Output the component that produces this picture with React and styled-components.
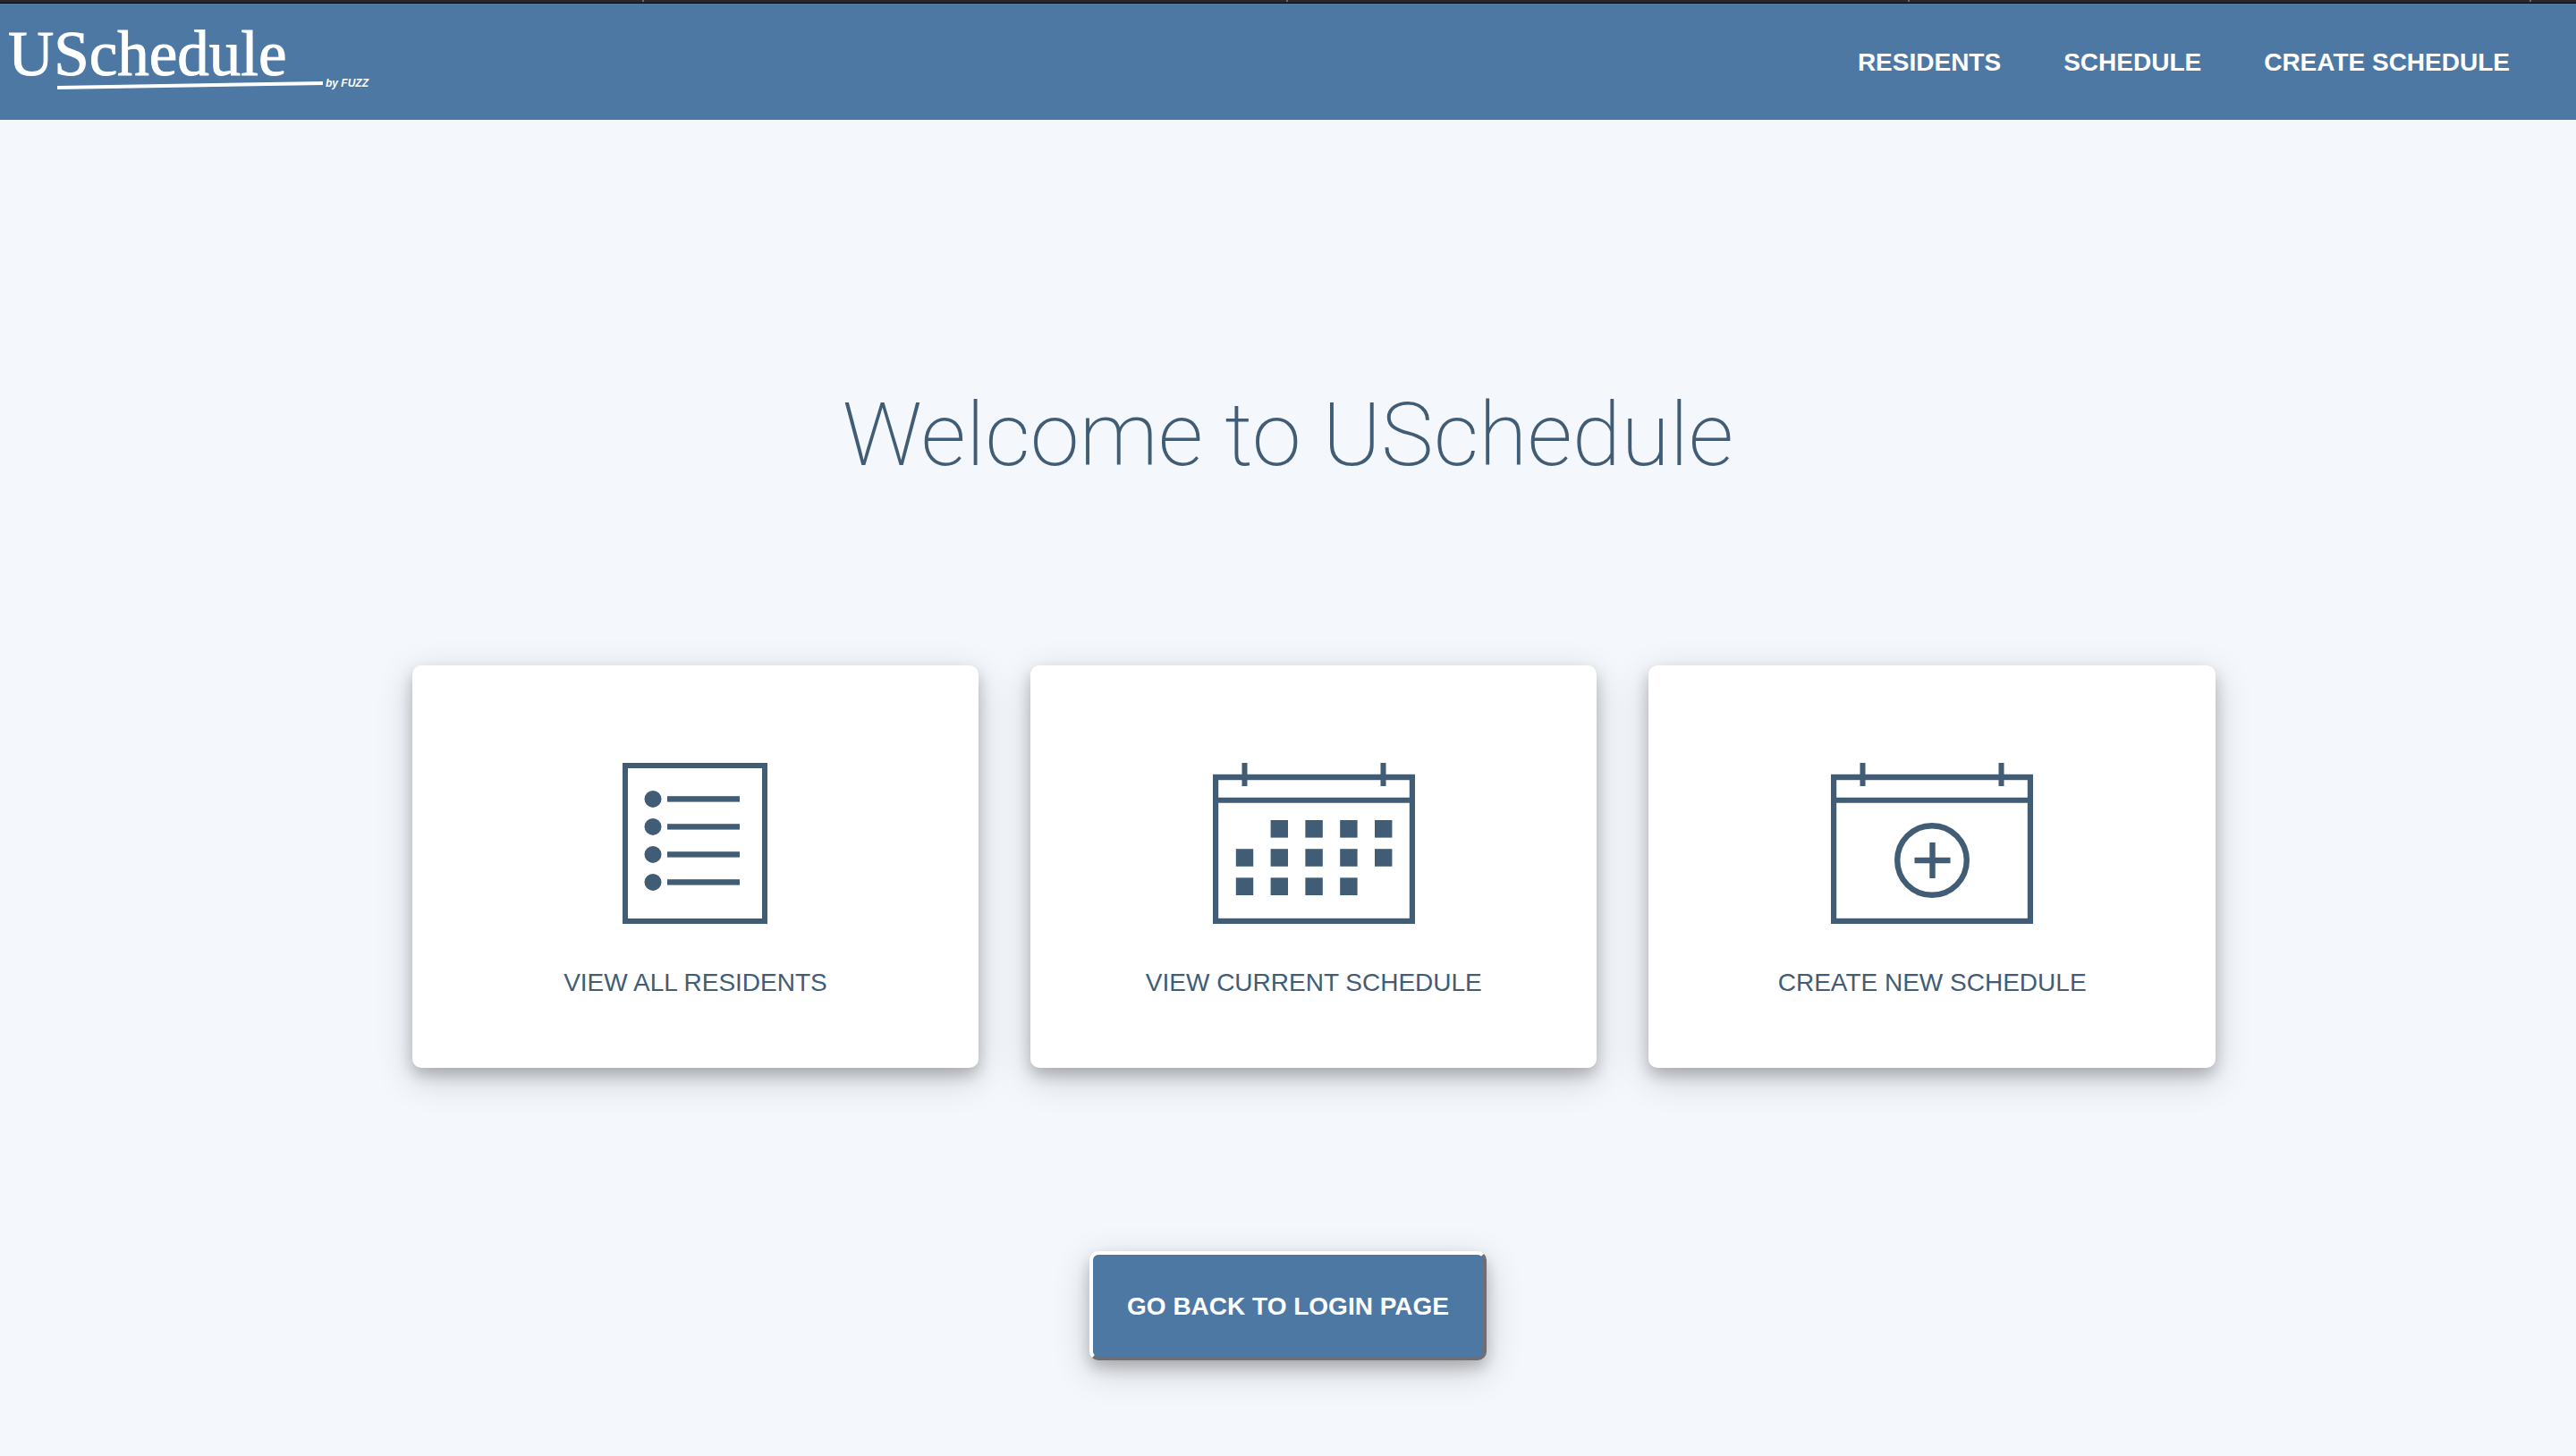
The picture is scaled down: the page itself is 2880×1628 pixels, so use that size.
import React from "react";
import styled, { createGlobalStyle } from "styled-components";

const GlobalStyle = createGlobalStyle`
  * { box-sizing: border-box; }
  body {
    margin: 0;
    background: #f4f7fc;
    font-family: "Liberation Sans", Arial, sans-serif;
    color: #415c75;
  }
`;

const TopStrip = styled.div`
  display: grid;
  grid-template-columns: 144fr 144fr 139fr 139fr 10fr;
  height: 4px;
  background: #28282b;
  border-bottom: 1px solid #000;
`;

const StripTab = styled.span`
  border-right: 2px solid #69696d;
  height: 2px;
  &:last-child { border-right: 0; }
`;

const Header = styled.header`
  display: flex;
  align-items: center;
  justify-content: space-between;
  height: 130px;
  padding: 0 74px 0 8px;
  background: #4c78a3;
`;

const HomeLink = styled.a`
  display: block;
  color: #fff;
  svg { display: block; overflow: visible; }
`;

const Nav = styled.nav`
  display: flex;
  gap: 70px;
  padding-top: 2px;
`;

const NavLink = styled.a`
  color: #fff;
  font-size: 28px;
  line-height: 32px;
  font-weight: 700;
  text-decoration: none;
`;

const Main = styled.main`
  display: flex;
  flex-direction: column;
  align-items: center;
  padding: 292px 0 106px;
`;

const Title = styled.h1`
  margin: 0;
  font-family: Roboto, "Liberation Sans", sans-serif;
  font-size: 99px;
  line-height: 120px;
  font-weight: 200;
`;

const Cards = styled.div`
  display: grid;
  grid-template-columns: repeat(3, 1fr);
  gap: 58px;
  width: 100%;
  margin-top: 198px;
  padding: 0 14% 0 16%;
`;

const Card = styled.a`
  display: flex;
  flex-direction: column;
  align-items: center;
  gap: 50px;
  height: 450px;
  padding-top: 109px;
  border-radius: 10px;
  background: #fff;
  box-shadow: 0 8px 16px rgba(0, 0, 0, 0.2), 0 12px 40px rgba(0, 0, 0, 0.19);
  color: inherit;
  font-size: 28px;
  line-height: 32px;
  text-decoration: none;
  svg { display: block; height: 180px; }
`;

const BackButton = styled.button`
  margin-top: 205px;
  padding: 42px 38px 40px;
  border: 4px solid;
  border-color: #fff #6f6f73 #6f6f73 #fff;
  border-radius: 10px;
  background: #4c78a3;
  box-shadow: 0 8px 16px rgba(0, 0, 0, 0.2), 0 12px 40px rgba(0, 0, 0, 0.19);
  color: #fff;
  font-family: inherit;
  font-size: 28px;
  line-height: 32px;
  font-weight: 700;
`;

const Logo = () => (
  <svg width="408" height="76" viewBox="0 0 408 76" fill="currentColor">
    <text x="1" y="53" fontFamily="Liberation Serif, serif" fontSize="71" stroke="currentColor" strokeWidth="1">USchedule</text>
    <path d="M56 65 353 60v4L56 69z" />
    <text x="356" y="66" fontFamily="Liberation Sans, sans-serif" fontSize="12" fontWeight="700" fontStyle="italic">by FUZZ</text>
  </svg>
);

const ListIcon = () => (
  <svg width="162" height="180" viewBox="0 0 162 180" fill="currentColor" aria-hidden="true">
    <rect x="3" y="3" width="156" height="174" fill="none" stroke="currentColor" strokeWidth="6" />
    {[40, 71, 102, 133].map((y) => (
      <g key={y}>
        <circle cx="34" cy={y + 0.4} r="9.5" />
        <rect x="50" y={y - 2.8} width="81" height="6.4" />
      </g>
    ))}
  </svg>
);

const CalendarFrame = ({ children }) => (
  <svg width="226" height="180" viewBox="0 0 226 180" fill="currentColor" aria-hidden="true">
    <rect x="3" y="16" width="220" height="161" fill="none" stroke="currentColor" strokeWidth="6.4" />
    <path d="M3 38.8h220v6H3zM32.5 0h6v26h-6zM187.5 0h6v26h-6z" />
    {children}
  </svg>
);

const CalendarIcon = () => (
  <CalendarFrame>
    {[[1, 2, 3, 4], [0, 1, 2, 3, 4], [0, 1, 2, 3]].map((row, r) =>
      row.map((c) => (
        <rect key={`${r}-${c}`} x={25.8 + c * 38.8} y={64 + r * 32.2} width="19.4" height="19.6" />
      ))
    )}
  </CalendarFrame>
);

const CalendarPlusIcon = () => (
  <CalendarFrame>
    <g fill="none" stroke="currentColor" strokeWidth="6.4">
      <circle cx="113" cy="109" r="38.8" />
      <path d="M93.5 109h40M113.5 89v40" />
    </g>
  </CalendarFrame>
);

const navItems = ["RESIDENTS", "SCHEDULE", "CREATE SCHEDULE"];

const cards = [
  { label: "VIEW ALL RESIDENTS", Icon: ListIcon },
  { label: "VIEW CURRENT SCHEDULE", Icon: CalendarIcon },
  { label: "CREATE NEW SCHEDULE", Icon: CalendarPlusIcon },
];

export default function App() {
  return (
    <>
      <GlobalStyle />
      <TopStrip>
        <StripTab />
        <StripTab />
        <StripTab />
        <StripTab />
        <StripTab />
      </TopStrip>
      <Header>
        <HomeLink href="#">
          <Logo />
        </HomeLink>
        <Nav>
          {navItems.map((item) => (
            <NavLink key={item} href="#">{item}</NavLink>
          ))}
        </Nav>
      </Header>
      <Main>
        <Title>Welcome to USchedule</Title>
        <Cards>
          {cards.map(({ label, Icon }) => (
            <Card key={label} href="#">
              <Icon />
              <span>{label}</span>
            </Card>
          ))}
        </Cards>
        <BackButton type="button">GO BACK TO LOGIN PAGE</BackButton>
      </Main>
    </>
  );
}
